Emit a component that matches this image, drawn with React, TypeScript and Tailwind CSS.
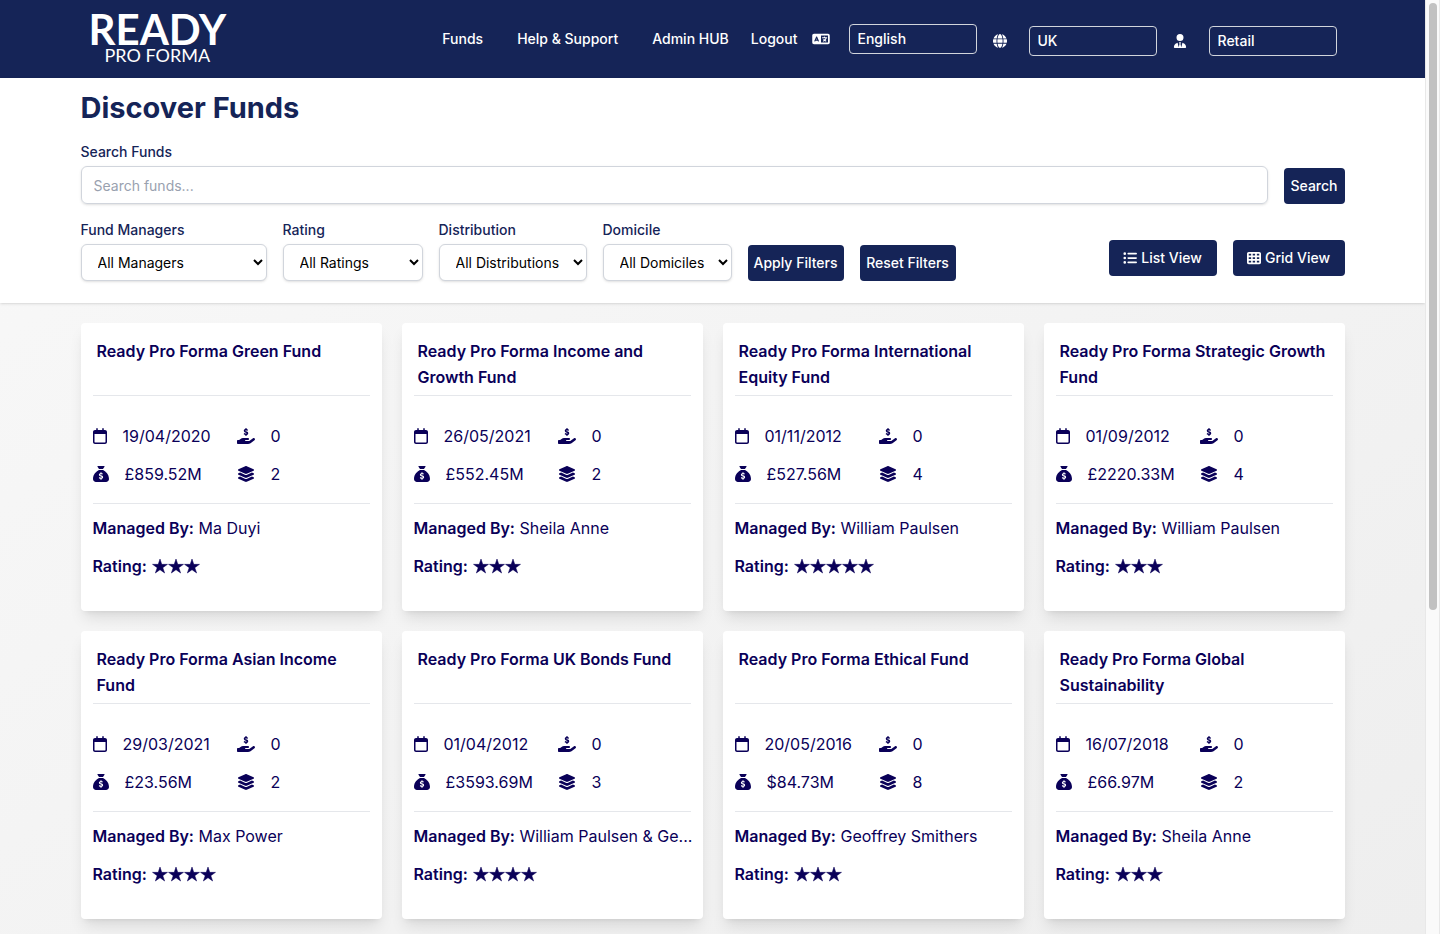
import { FaGlobe, FaLanguage, FaUserTie, FaListUl, FaTableCells, FaRegCalendar, FaHandHoldingDollar, FaSackDollar, FaLayerGroup } from "react-icons/fa6"
import { IoStarSharp } from "react-icons/io5"

type Fund = {
  name: string
  launched: string
  size: string
  holdings: number
  classes: number
  manager: string
  rating: number
}

const funds: Fund[] = [
  { name: "Ready Pro Forma Green Fund", launched: "19/04/2020", size: "£859.52M", holdings: 0, classes: 2, manager: "Ma Duyi", rating: 3 },
  { name: "Ready Pro Forma Income and Growth Fund", launched: "26/05/2021", size: "£552.45M", holdings: 0, classes: 2, manager: "Sheila Anne", rating: 3 },
  { name: "Ready Pro Forma International Equity Fund", launched: "01/11/2012", size: "£527.56M", holdings: 0, classes: 4, manager: "William Paulsen", rating: 5 },
  { name: "Ready Pro Forma Strategic Growth Fund", launched: "01/09/2012", size: "£2220.33M", holdings: 0, classes: 4, manager: "William Paulsen", rating: 3 },
  { name: "Ready Pro Forma Asian Income Fund", launched: "29/03/2021", size: "£23.56M", holdings: 0, classes: 2, manager: "Max Power", rating: 4 },
  { name: "Ready Pro Forma UK Bonds Fund", launched: "01/04/2012", size: "£3593.69M", holdings: 0, classes: 3, manager: "William Paulsen & Ge...", rating: 4 },
  { name: "Ready Pro Forma Ethical Fund", launched: "20/05/2016", size: "$84.73M", holdings: 0, classes: 8, manager: "Geoffrey Smithers", rating: 3 },
  { name: "Ready Pro Forma Global Sustainability", launched: "16/07/2018", size: "£66.97M", holdings: 0, classes: 2, manager: "Sheila Anne", rating: 3 },
]

const filters = [
  { id: "managers", label: "Fund Managers", option: "All Managers", width: "w-[186px]" },
  { id: "rating", label: "Rating", option: "All Ratings", width: "w-[140px]" },
  { id: "distribution", label: "Distribution", option: "All Distributions", width: "w-[148px]" },
  { id: "domicile", label: "Domicile", option: "All Domiciles", width: "w-[129px]" },
]

const headerSelect = "block w-32 h-[30px] appearance-none rounded border border-gray-300 bg-[#152457] px-2 text-sm font-medium text-white"
const button = "h-9 rounded bg-[#152457] text-sm font-medium text-white whitespace-nowrap"

function Header() {
  return (
    <header className="bg-[#152457] text-white">
      <div className="max-w-7xl mx-auto px-4 h-[78px] flex items-center justify-between">
        <a href="#" className="pb-1 flex flex-col items-center font-['Lato',sans-serif]">
          <span className="text-[42px] leading-9 font-bold">READY</span>
          <span className="text-lg leading-4">PRO FORMA</span>
        </a>
        <nav className="flex items-center text-sm font-medium">
          <a href="#" className="mr-[34px]">Funds</a>
          <a href="#" className="mr-[34px]">Help &amp; Support</a>
          <a href="#" className="mr-[22px]">Admin HUB</a>
          <a href="#">Logout</a>
          <label htmlFor="language" className="ml-[14px] mr-[19px]"><FaLanguage className="w-[18px] h-3.5" /></label>
          <select id="language" aria-label="Language" className={headerSelect}><option>English</option></select>
          <label htmlFor="country" className="w-[52px] pl-4 pt-1"><FaGlobe className="size-3.5" /></label>
          <select id="country" aria-label="Country" className={headerSelect + " mt-1"}><option>UK</option></select>
          <label htmlFor="investor" className="w-[52px] pl-4 pt-1"><FaUserTie className="size-3.5" /></label>
          <select id="investor" aria-label="Investor type" className={headerSelect + " mt-1"}><option>Retail</option></select>
        </nav>
      </div>
    </header>
  )
}

function FilterBar() {
  return (
    <section className="bg-white shadow-sm">
      <div className="max-w-7xl mx-auto px-2 pt-3 pb-[22px] text-[#152457]">
        <h1 className="text-[29px] leading-9 font-bold">Discover Funds</h1>
        <form className="mt-4 flex items-end gap-4">
          <div className="flex-1">
            <label htmlFor="search" className="block text-sm font-medium">Search Funds</label>
            <input id="search" type="text" placeholder="Search funds..." className="mt-1 block w-full h-[38px] rounded-md border border-gray-300 px-3 text-sm shadow-sm placeholder:text-gray-400" />
          </div>
          <button type="button" className={button + " w-[61px]"}>Search</button>
        </form>
        <div className="mt-4 flex items-end gap-4">
          {filters.map((f) => (
            <div key={f.id} className={f.width}>
              <label htmlFor={f.id} className="block text-sm font-medium">{f.label}</label>
              <select id={f.id} className="mt-1 block w-full h-[37px] rounded-md border border-gray-300 bg-white pl-3 text-sm text-black shadow-sm">
                <option>{f.option}</option>
              </select>
            </div>
          ))}
          <button type="button" className={button + " w-24"}>Apply Filters</button>
          <button type="button" className={button + " w-24"}>Reset Filters</button>
          <div className="ml-auto mb-[5px] flex gap-4">
            <button type="button" className={button + " w-[108px] flex items-center justify-center gap-1"}>
              <FaListUl className="size-3.5" /> List View
            </button>
            <button type="button" className={button + " w-28 flex items-center justify-center gap-1"}>
              <FaTableCells className="size-3.5" /> Grid View
            </button>
          </div>
        </div>
      </div>
    </section>
  )
}

function FundCard({ fund }: { fund: Fund }) {
  return (
    <article className="rounded bg-white px-3 pb-[26px] text-[#0a0058] shadow-lg">
      <h2 className="h-[73px] border-b border-gray-200 px-1 pt-[15px] font-semibold leading-[26px]">{fund.name}</h2>
      <div className="mt-[21px] pb-[10px] border-b border-gray-200 leading-[38px]">
        <div className="flex">
          <span className="w-36 flex items-center gap-4"><FaRegCalendar className="w-3.5 h-4" />{fund.launched}</span>
          <span className="flex items-center gap-4"><FaHandHoldingDollar className="w-[18px] h-4" />{fund.holdings}</span>
        </div>
        <div className="flex">
          <span className="w-36 flex items-center gap-4"><FaSackDollar className="size-4" />{fund.size}</span>
          <span className="flex items-center gap-4"><FaLayerGroup className="w-[18px] h-4" />{fund.classes}</span>
        </div>
      </div>
      <div className="pt-[5px] leading-[38px]">
        <p className="whitespace-nowrap"><strong className="font-semibold">Managed By:</strong> {fund.manager}</p>
        <p className="flex items-center">
          <strong className="mr-[5px] font-semibold">Rating:</strong>
          {Array.from({ length: fund.rating }, (_, i) => (
            <IoStarSharp key={i} className="size-4 stroke-current stroke-[16] [stroke-linejoin:round]" />
          ))}
        </p>
      </div>
    </article>
  )
}

export default function App() {
  return (
    <div className="min-h-screen flex font-['Inter',sans-serif]">
      <div className="flex-1 min-w-0 bg-linear-to-br from-[#f9f9f9] to-[#eeeeee]">
        <Header />
        <FilterBar />
        <main className="max-w-7xl mx-auto px-2 pt-5 pb-[15px] grid grid-cols-4 gap-5">
          {funds.map((fund) => (
            <FundCard key={fund.name} fund={fund} />
          ))}
        </main>
      </div>
      <div className="w-[15px] border-x border-[#e8e8e8] bg-[#fafafa] flex justify-center pt-[3px]">
        <div className="w-2 h-[607px] rounded-full bg-[#c1c1c1]" />
      </div>
    </div>
  )
}
